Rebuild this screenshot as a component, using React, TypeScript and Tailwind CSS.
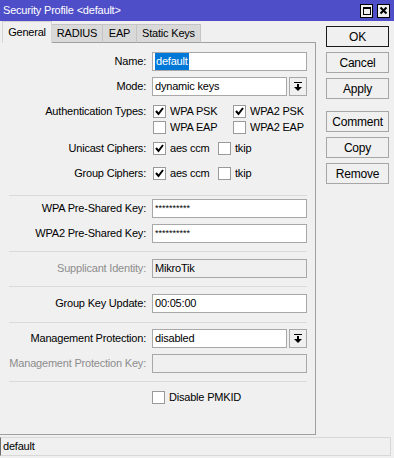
import React from "react";

type Kids = { children?: React.ReactNode };

function Label({ children, disabled }: Kids & { disabled?: boolean }) {
  return (
    <div
      className={
        disabled
          ? "w-[146px] shrink-0 whitespace-nowrap text-right text-[#8d8d8d]"
          : "w-[146px] shrink-0 whitespace-nowrap text-right text-black"
      }
    >
      {children}
    </div>
  );
}

function Field({ children, disabled }: Kids & { disabled?: boolean }) {
  return (
    <div
      className={
        disabled
          ? "ml-[6px] flex h-[19px] w-[155px] items-center border border-[#a8a8a8] bg-[#f0f0f0] px-[2px]"
          : "ml-[6px] flex h-[19px] w-[155px] items-center border border-[#a8a8a8] bg-white px-[2px]"
      }
    >
      {children}
    </div>
  );
}

function DropArrow() {
  return (
    <svg width="16" height="17" viewBox="0 0 16 17">
      <rect x="4" y="4" width="8" height="1" fill="#000" />
      <rect x="7" y="6" width="2" height="3" fill="#000" />
      <polygon points="4,9 12,9 8,13" fill="#000" />
    </svg>
  );
}

function Select({ value }: { value: string }) {
  return (
    <div className="ml-[6px] flex h-[19px] w-[155px] gap-[2px]">
      <div className="flex flex-1 items-center border border-[#a8a8a8] bg-white px-[2px]">
        {value}
      </div>
      <div className="flex w-[18px] items-center justify-center border border-[#a8a8a8] bg-[#f0f0f0]">
        <DropArrow />
      </div>
    </div>
  );
}

function Check({ on, label, w }: { on?: boolean; label: string; w: string }) {
  return (
    <div className={`flex items-center ${w}`}>
      <div className="flex h-[13px] w-[13px] shrink-0 items-center justify-center border border-[#9a9a9a] bg-white">
        {on && (
          <svg width="11" height="11" viewBox="0 0 11 11">
            <polyline
              points="2,5 4.5,8 9,2"
              fill="none"
              stroke="#000"
              strokeWidth="2"
            />
          </svg>
        )}
      </div>
      <span className="ml-[4px] whitespace-nowrap">{label}</span>
    </div>
  );
}

function Sep({ mt }: { mt: string }) {
  return <div className={`ml-[9px] h-px w-[298px] bg-[#dadada] ${mt}`} />;
}

function Btn({ children, primary, mt }: Kids & { primary?: boolean; mt?: string }) {
  return (
    <div
      className={
        primary
          ? `flex h-[21px] w-[63px] items-center justify-center border border-[#1a1a1a] bg-[#f0f0f0] ${mt ?? ""}`
          : `flex h-[21px] w-[63px] items-center justify-center border border-[#a6a6a6] bg-[#f0f0f0] ${mt ?? ""}`
      }
    >
      {children}
    </div>
  );
}

export default function App() {
  return (
    <div className="flex h-[458px] w-[394px] flex-col bg-[#f0f0f0] font-['Liberation_Sans',Arial,sans-serif] text-[11px] tracking-[-0.2px] text-black">
      {/* title bar */}
      <div className="flex h-[21px] shrink-0 items-center bg-[#4e4ec8] pl-[3px] pr-[4px]">
        <span className="flex-1 text-white">Security Profile &lt;default&gt;</span>
        <div className="flex h-[14px] w-[13px] items-center justify-center border border-black bg-[#f0f0f0]">
          <div className="h-[8px] w-[8px] border border-t-2 border-black" />
        </div>
        <div className="ml-[4px] flex h-[14px] w-[13px] items-center justify-center border border-black bg-[#f0f0f0]">
          <svg width="9" height="9" viewBox="0 0 9 9">
            <path d="M1.5 1.5 L7.5 7.5 M7.5 1.5 L1.5 7.5" stroke="#000" strokeWidth="2" />
          </svg>
        </div>
      </div>

      <div className="flex h-[414px] shrink-0">
        {/* left: tabs and panel */}
        <div className="flex w-[316px] flex-col">
          <div className="flex h-[22px] items-end">
            <div className="ml-[2px] flex h-[22px] w-[50px] items-center justify-center border-l border-r border-t border-[#d4d4d4] bg-[#f0f0f0]">
              General
            </div>
            <div className="flex h-[19px] w-[51px] items-center justify-center border-b border-r border-t border-[#c4c4c4] border-b-[#a0a0a0] bg-[#d9d9d9]">
              RADIUS
            </div>
            <div className="flex h-[19px] w-[34px] items-center justify-center border-b border-r border-t border-[#c4c4c4] border-b-[#a0a0a0] bg-[#d9d9d9]">
              EAP
            </div>
            <div className="flex h-[19px] w-[64px] items-center justify-center border-b border-r border-t border-[#c4c4c4] border-b-[#a0a0a0] bg-[#d9d9d9]">
              Static Keys
            </div>
            <div className="h-px flex-1 bg-[#a0a0a0]" />
          </div>

          <div className="flex flex-1 flex-col border-b border-r border-[#a0a0a0] pt-[8px]">
            <div className="flex h-[21px] items-center">
              <Label>Name:</Label>
              <Field>
                <span className="bg-[#0078d7] px-px text-white">default</span>
              </Field>
            </div>
            <div className="mt-[4px] flex h-[21px] items-center">
              <Label>Mode:</Label>
              <Select value="dynamic keys" />
            </div>
            <div className="mt-[6px] flex h-[16px] items-center">
              <Label>Authentication Types:</Label>
              <div className="ml-[7px] flex">
                <Check on label="WPA PSK" w="w-[80px]" />
                <Check on label="WPA2 PSK" w="w-[80px]" />
              </div>
            </div>
            <div className="flex h-[16px] items-center">
              <div className="w-[146px]" />
              <div className="ml-[7px] flex">
                <Check label="WPA EAP" w="w-[80px]" />
                <Check label="WPA2 EAP" w="w-[80px]" />
              </div>
            </div>
            <div className="mt-[3px] flex h-[21px] items-center">
              <Label>Unicast Ciphers:</Label>
              <div className="ml-[7px] flex">
                <Check on label="aes ccm" w="w-[65px]" />
                <Check label="tkip" w="w-[40px]" />
              </div>
            </div>
            <div className="mt-[4px] flex h-[21px] items-center">
              <Label>Group Ciphers:</Label>
              <div className="ml-[7px] flex">
                <Check on label="aes ccm" w="w-[65px]" />
                <Check label="tkip" w="w-[40px]" />
              </div>
            </div>

            <Sep mt="mt-[11px]" />
            <div className="mt-[2px] flex h-[21px] items-center">
              <Label>WPA Pre-Shared Key:</Label>
              <Field>
                <span className="text-[9px] tracking-[0px]">**********</span>
              </Field>
            </div>
            <div className="mt-[4px] flex h-[21px] items-center">
              <Label>WPA2 Pre-Shared Key:</Label>
              <Field>
                <span className="text-[9px] tracking-[0px]">**********</span>
              </Field>
            </div>

            <Sep mt="mt-[7px]" />
            <div className="mt-[6px] flex h-[21px] items-center">
              <Label disabled>Supplicant Identity:</Label>
              <Field disabled>MikroTik</Field>
            </div>

            <Sep mt="mt-[7px]" />
            <div className="mt-[6px] flex h-[21px] items-center">
              <Label>Group Key Update:</Label>
              <Field>00:05:00</Field>
            </div>

            <Sep mt="mt-[8px]" />
            <div className="mt-[5px] flex h-[21px] items-center">
              <Label>Management Protection:</Label>
              <Select value="disabled" />
            </div>
            <div className="mt-[4px] flex h-[21px] items-center">
              <Label disabled>Management Protection Key:</Label>
              <Field disabled />
            </div>

            <Sep mt="mt-[7px]" />
            <div className="mt-[7px] flex h-[16px] items-center">
              <div className="w-[146px]" />
              <div className="ml-[6px] flex">
                <Check label="Disable PMKID" w="w-[120px]" />
              </div>
            </div>
          </div>
        </div>

        {/* right: buttons */}
        <div className="ml-[10px] flex flex-col pt-[5px] text-[12px]">
          <Btn primary>OK</Btn>
          <Btn mt="mt-[5px]">Cancel</Btn>
          <Btn mt="mt-[5px]">Apply</Btn>
          <Btn mt="mt-[12px]">Comment</Btn>
          <Btn mt="mt-[5px]">Copy</Btn>
          <Btn mt="mt-[5px]">Remove</Btn>
        </div>
      </div>

      {/* status bar */}
      <div className="mt-[2px] flex h-[19px] w-[391px] items-center border border-[#d8d8d8] border-l-[#6e6e6e] pl-[2px]">
        default
      </div>
    </div>
  );
}
